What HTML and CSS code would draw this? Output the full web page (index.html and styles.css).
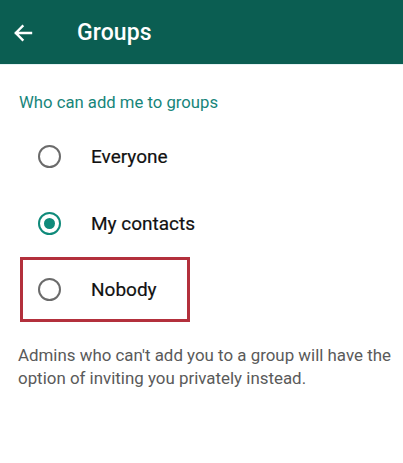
FILE: index.html
```html
<!DOCTYPE html>
<html>
<head>
<meta charset="utf-8">
<link rel="stylesheet" href="styles.css">
</head>
<body>
<header class="appbar">
  <svg class="back" width="24" height="24" viewBox="0 0 24 24"><path d="M20 12H5M11.5 5.2L4.8 12l6.7 6.8" fill="none" stroke="#fff" stroke-width="2.4" stroke-linecap="square"/></svg>
  <h1 class="title">Groups</h1>
</header>
<main class="content">
  <div class="section-title">Who can add me to groups</div>
  <div class="options">
    <div class="option">
      <span class="radio"></span>
      <span class="label">Everyone</span>
    </div>
    <div class="option">
      <span class="radio checked"></span>
      <span class="label">My contacts</span>
    </div>
    <div class="option highlighted">
      <span class="radio"></span>
      <span class="label">Nobody</span>
    </div>
  </div>
  <p class="note">Admins who can't add you to a group will have the option of inviting you privately instead.</p>
</main>
</body>
</html>
```
FILE: styles.css
```css
* { box-sizing: border-box; }
html, body { margin: 0; padding: 0; background: #fff; }
body { font-family: Roboto, "Noto Sans", "Liberation Sans", sans-serif; width: 403px; height: 463px; overflow: hidden; }

.appbar {
  height: 65px;
  background: #0b5e52;
  display: flex;
  align-items: center;
  padding-left: 11px;
  border-bottom: 1px solid #e6f3f4;
}
.back { display: block; margin-top: 1px; }
.title {
  margin: 0 0 0 42px;
  color: #fff;
  font-size: 23px;
  font-weight: 500;
  letter-spacing: 0.1px;
}

.content { padding-top: 27px; }
.section-title {
  padding-left: 19px;
  font-size: 16.7px;
  line-height: 22px;
  color: #17857a;
  margin-bottom: 9px;
}

.options { display: flex; flex-direction: column; }
.option {
  height: 67px;
  display: flex;
  align-items: center;
  padding-left: 38px;
}
.option.highlighted {
  margin-left: 20px;
  width: 170px;
  height: 65px;
  padding-left: 15px;
  border: 3px solid #b3303c;
}
.radio {
  width: 23px;
  height: 23px;
  border-radius: 50%;
  border: 2px solid #6b6b6b;
  display: flex;
  align-items: center;
  justify-content: center;
  flex: none;
}
.radio.checked { border-color: #0f8a7a; }
.radio.checked::after {
  content: "";
  width: 11px;
  height: 11px;
  border-radius: 50%;
  background: #0f8a7a;
}
.label {
  margin-left: 30px;
  font-size: 19px;
  color: #111;
  font-weight: 400;
  -webkit-text-stroke: 0.2px #111;
}

.note {
  margin: 22px 0 0;
  padding: 0 4px 0 18px;
  font-size: 16.9px;
  line-height: 23px;
  color: #5a5a5a;
}
```
